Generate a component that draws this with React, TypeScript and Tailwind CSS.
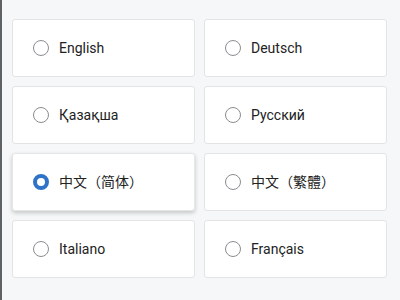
import React from "react";

const langs = [
  "English",
  "Deutsch",
  "Қазақша",
  "Русский",
  "中文（简体）",
  "中文（繁體）",
  "Italiano",
  "Français",
];

export default function App() {
  const selected = 4;
  return (
    <div
      className="w-[400px] h-[300px] bg-[#f5f7f8] border-l-2 border-l-[#5f6366] overflow-hidden"
      style={{ fontFamily: 'Roboto, "Noto Sans CJK SC", sans-serif' }}
    >
      <div className="grid grid-cols-[183px_183px] gap-[9px] pl-[10px] pt-[19px]">
        {langs.map((l, i) => {
          const sel = i === selected;
          return (
            <div
              key={l}
              className={
                "h-[58px] bg-white rounded-[3px] border flex items-center pl-[20px] " +
                (sel
                  ? "border-[#e4e6e8] shadow-[0_2px_4px_rgba(0,0,0,0.2)]"
                  : "border-[#e2e4e6]")
              }
            >
              {sel ? (
                <span className="w-[16px] h-[16px] rounded-full border-[4px] border-[#2f72c8] bg-white box-border" />
              ) : (
                <span className="w-[16px] h-[16px] rounded-full border-[1.5px] border-[#8a8d90] bg-white box-border" />
              )}
              <span className="ml-[10px] text-[14px] text-[#222]">{l}</span>
            </div>
          );
        })}
      </div>
    </div>
  );
}
